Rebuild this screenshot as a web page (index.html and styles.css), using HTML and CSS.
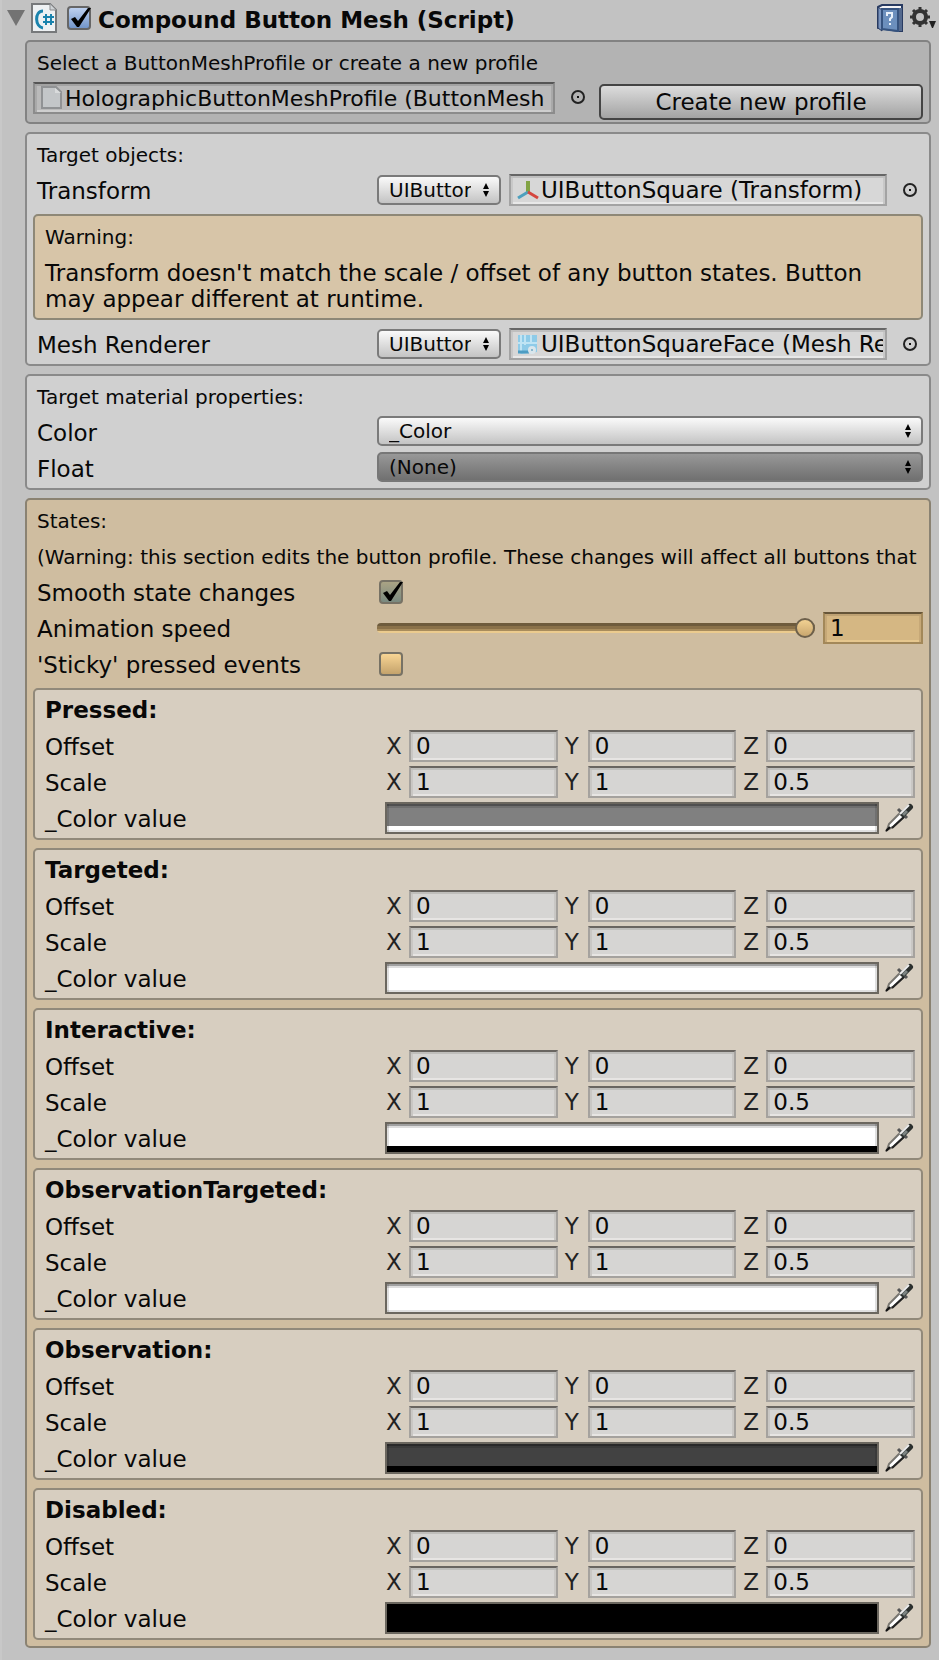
FILE: index.html
```html
<!DOCTYPE html>
<html lang="en">
<head>
<meta charset="utf-8">
<title>Compound Button Mesh (Script)</title>
<link rel="stylesheet" href="styles.css">
</head>
<body>
<svg class="defs" aria-hidden="true">
  <symbol id="picker" viewBox="0 0 16 16">
    <circle cx="8" cy="8" r="6" fill="none" stroke="#222" stroke-width="2"/>
    <rect x="7" y="7" width="2" height="2" fill="#111"/>
  </symbol>
  <symbol id="dropper" viewBox="0 0 30 30">
    <path d="M2 27L4 21L16 9L20 13L8 24Z" fill="#fff" stroke="#77756f" stroke-width="2"/>
    <path d="M7 25L20 13" stroke="#222" stroke-width="2" fill="none"/>
    <path d="M1 28L5 24" stroke="#111" stroke-width="2"/>
    <path d="M13 6L22 15" stroke="#555" stroke-width="3"/>
    <path d="M18 11L25 4" stroke="#2b302e" stroke-width="6" stroke-linecap="round"/>
    <path d="M15 11L24 2" stroke="#eee" stroke-width="2"/>
    <path d="M18 12L22 8" stroke="#7d8482" stroke-width="3"/>
  </symbol>
</svg>
<main class="inspector">
  <header class="header">
    <button class="plain" aria-label="Collapse"><svg width="18" height="16" viewBox="0 0 18 16"><path d="M0 0H18L9 16Z" fill="#737373"/></svg></button>
    <svg class="script-icon" width="26" height="30" viewBox="0 0 26 30">
      <path d="M1 1H19L25 7V29H1Z" fill="#eef1f3" stroke="#77797b" stroke-width="2"/>
      <path d="M19 1V7H25" fill="#cfd3d6" stroke="#8b8d8f"/>
      <path d="M12 8C3 8 4 24 12 25" fill="none" stroke="#1a83ad" stroke-width="3"/>
      <path d="M15 11V22M20 11V22M12 14H23M12 19H23" stroke="#1a83ad" stroke-width="2"/>
    </svg>
    <input type="checkbox" class="check blue" id="enabled" checked>
    <label class="title" for="enabled">Compound Button Mesh (Script)</label>
    <button class="plain" aria-label="Help"><svg width="26" height="28" viewBox="0 0 26 28">
      <path d="M1 3L5 1H25V27H21L1 24Z" fill="#f3f3f5" stroke="#293b61" stroke-width="2"/>
      <path d="M1 3L5 6V27L1 24Z" fill="#7993bd" stroke="#293b61"/>
      <path d="M5 5H21V27L5 25Z" fill="#6c8fbd" stroke="#36537f" stroke-width="2"/>
      <path d="M22 4H25V27H22Z" fill="#54698d"/>
      <path d="M10 12V9H15V13L13 15V17M13 19V21" fill="none" stroke="#e8f0fa" stroke-width="2"/>
    </svg></button>
    <button class="plain" aria-label="Component menu"><svg width="28" height="24" viewBox="0 0 28 24">
      <circle cx="11" cy="11" r="6" fill="none" stroke="#333" stroke-width="4"/>
      <path d="M11 1V5M11 17V21M1 11H5M17 11H21M4 4L7 7M15 15L18 18M4 18L7 15M15 7L18 4" stroke="#333" stroke-width="3"/>
      <path d="M20 15H27L24 22H23Z" fill="#222"/>
    </svg></button>
  </header>

  <section class="panel profile">
    <h2 class="caption">Select a ButtonMeshProfile or create a new profile</h2>
    <div class="profile-row">
      <div class="object">
        <svg width="22" height="24" viewBox="0 0 22 24"><path d="M1 1H15L20 6V22H1Z" fill="#c3c6c8" stroke="#909294" stroke-width="2"/><path d="M14 2V7H20" fill="#d9dbdc"/></svg>
        <input readonly aria-label="Profile" value="HolographicButtonMeshProfile (ButtonMesh">
      </div>
      <button class="plain pick" aria-label="Pick profile"><svg width="16" height="16"><use href="#picker"/></svg></button>
      <button class="create">Create new profile</button>
    </div>
  </section>

  <section class="panel targets">
    <h2 class="caption">Target objects:</h2>
    <div class="row">
      <label class="name" for="transform">Transform</label>
      <select class="popup mini" id="transform"><option>UIButtonSquare</option></select>
      <div class="object">
        <svg width="22" height="24" viewBox="0 0 22 24"><path d="M11 3V14" stroke="#82a344" stroke-width="4"/><path d="M11 14L1 20" stroke="#4da0be" stroke-width="3"/><path d="M11 14L21 20" stroke="#d5463f" stroke-width="3"/></svg>
        <input readonly aria-label="Transform object" value="UIButtonSquare (Transform)">
      </div>
      <button class="plain pick" aria-label="Pick transform"><svg width="16" height="16"><use href="#picker"/></svg></button>
    </div>
    <div class="warning">
      <h3 class="caption">Warning:</h3>
      <p>Transform doesn't match the scale / offset of any button states. Button may appear different at runtime.</p>
    </div>
    <div class="row">
      <label class="name" for="renderer">Mesh Renderer</label>
      <select class="popup mini" id="renderer"><option>UIButtonSquare</option></select>
      <div class="object">
        <svg width="22" height="24" viewBox="0 0 22 24"><path d="M1 3H20V20L4 22L1 19Z" fill="#8ecbe8"/><path d="M4 3V21M8 3V13M14 3V12M1 11H20" stroke="#bfe4f4" stroke-width="2"/><path d="M1 20H12" stroke="#4d9cc2" stroke-width="3"/><circle cx="15" cy="18" r="4" fill="#d9e6ec"/><circle cx="15" cy="18" r="1" fill="#6fa9c4"/></svg>
        <input readonly aria-label="Mesh renderer object" value="UIButtonSquareFace (Mesh Renderer)">
      </div>
      <button class="plain pick" aria-label="Pick mesh renderer"><svg width="16" height="16"><use href="#picker"/></svg></button>
    </div>
  </section>

  <section class="panel material">
    <h2 class="caption">Target material properties:</h2>
    <div class="row"><label class="name" for="color">Color</label><select class="popup" id="color"><option>_Color</option></select></div>
    <div class="row"><label class="name" for="float">Float</label><select class="popup dark" id="float"><option>(None)</option></select></div>
  </section>

  <section class="panel states">
    <h2 class="caption">States:</h2>
    <p class="note">(Warning: this section edits the button profile. These changes will affect all buttons that</p>
    <div class="row"><label class="name" for="smooth">Smooth state changes</label><input type="checkbox" class="check olive" id="smooth" checked></div>
    <div class="row"><label class="name" for="speed">Animation speed</label><input type="range" class="slider" id="speed" min="0" max="1" step="any" value="1"><input class="field amber" aria-label="Animation speed value" value="1"></div>
    <div class="row"><label class="name" for="sticky">'Sticky' pressed events</label><input type="checkbox" class="check gold" id="sticky"></div>

    <div class="state-list">
      <section class="state">
        <h3>Pressed:</h3>
        <div class="row"><span class="name">Offset</span><div class="vector"><label for="p-ox">X</label><input class="field" id="p-ox" value="0"><label for="p-oy">Y</label><input class="field" id="p-oy" value="0"><label for="p-oz">Z</label><input class="field" id="p-oz" value="0"></div></div>
        <div class="row"><span class="name">Scale</span><div class="vector"><label for="p-sx">X</label><input class="field" id="p-sx" value="1"><label for="p-sy">Y</label><input class="field" id="p-sy" value="1"><label for="p-sz">Z</label><input class="field" id="p-sz" value="0.5"></div></div>
        <div class="row"><span class="name">_Color value</span><button class="swatch gray opaque" aria-label="Color value"></button><button class="plain" aria-label="Eyedropper"><svg width="30" height="30"><use href="#dropper"/></svg></button></div>
      </section>
      <section class="state">
        <h3>Targeted:</h3>
        <div class="row"><span class="name">Offset</span><div class="vector"><label for="t-ox">X</label><input class="field" id="t-ox" value="0"><label for="t-oy">Y</label><input class="field" id="t-oy" value="0"><label for="t-oz">Z</label><input class="field" id="t-oz" value="0"></div></div>
        <div class="row"><span class="name">Scale</span><div class="vector"><label for="t-sx">X</label><input class="field" id="t-sx" value="1"><label for="t-sy">Y</label><input class="field" id="t-sy" value="1"><label for="t-sz">Z</label><input class="field" id="t-sz" value="0.5"></div></div>
        <div class="row"><span class="name">_Color value</span><button class="swatch white opaque" aria-label="Color value"></button><button class="plain" aria-label="Eyedropper"><svg width="30" height="30"><use href="#dropper"/></svg></button></div>
      </section>
      <section class="state">
        <h3>Interactive:</h3>
        <div class="row"><span class="name">Offset</span><div class="vector"><label for="i-ox">X</label><input class="field" id="i-ox" value="0"><label for="i-oy">Y</label><input class="field" id="i-oy" value="0"><label for="i-oz">Z</label><input class="field" id="i-oz" value="0"></div></div>
        <div class="row"><span class="name">Scale</span><div class="vector"><label for="i-sx">X</label><input class="field" id="i-sx" value="1"><label for="i-sy">Y</label><input class="field" id="i-sy" value="1"><label for="i-sz">Z</label><input class="field" id="i-sz" value="0.5"></div></div>
        <div class="row"><span class="name">_Color value</span><button class="swatch white" aria-label="Color value"></button><button class="plain" aria-label="Eyedropper"><svg width="30" height="30"><use href="#dropper"/></svg></button></div>
      </section>
      <section class="state">
        <h3>ObservationTargeted:</h3>
        <div class="row"><span class="name">Offset</span><div class="vector"><label for="ot-ox">X</label><input class="field" id="ot-ox" value="0"><label for="ot-oy">Y</label><input class="field" id="ot-oy" value="0"><label for="ot-oz">Z</label><input class="field" id="ot-oz" value="0"></div></div>
        <div class="row"><span class="name">Scale</span><div class="vector"><label for="ot-sx">X</label><input class="field" id="ot-sx" value="1"><label for="ot-sy">Y</label><input class="field" id="ot-sy" value="1"><label for="ot-sz">Z</label><input class="field" id="ot-sz" value="0.5"></div></div>
        <div class="row"><span class="name">_Color value</span><button class="swatch white opaque" aria-label="Color value"></button><button class="plain" aria-label="Eyedropper"><svg width="30" height="30"><use href="#dropper"/></svg></button></div>
      </section>
      <section class="state">
        <h3>Observation:</h3>
        <div class="row"><span class="name">Offset</span><div class="vector"><label for="o-ox">X</label><input class="field" id="o-ox" value="0"><label for="o-oy">Y</label><input class="field" id="o-oy" value="0"><label for="o-oz">Z</label><input class="field" id="o-oz" value="0"></div></div>
        <div class="row"><span class="name">Scale</span><div class="vector"><label for="o-sx">X</label><input class="field" id="o-sx" value="1"><label for="o-sy">Y</label><input class="field" id="o-sy" value="1"><label for="o-sz">Z</label><input class="field" id="o-sz" value="0.5"></div></div>
        <div class="row"><span class="name">_Color value</span><button class="swatch charcoal" aria-label="Color value"></button><button class="plain" aria-label="Eyedropper"><svg width="30" height="30"><use href="#dropper"/></svg></button></div>
      </section>
      <section class="state">
        <h3>Disabled:</h3>
        <div class="row"><span class="name">Offset</span><div class="vector"><label for="d-ox">X</label><input class="field" id="d-ox" value="0"><label for="d-oy">Y</label><input class="field" id="d-oy" value="0"><label for="d-oz">Z</label><input class="field" id="d-oz" value="0"></div></div>
        <div class="row"><span class="name">Scale</span><div class="vector"><label for="d-sx">X</label><input class="field" id="d-sx" value="1"><label for="d-sy">Y</label><input class="field" id="d-sy" value="1"><label for="d-sz">Z</label><input class="field" id="d-sz" value="0.5"></div></div>
        <div class="row"><span class="name">_Color value</span><button class="swatch black" aria-label="Color value"></button><button class="plain" aria-label="Eyedropper"><svg width="30" height="30"><use href="#dropper"/></svg></button></div>
      </section>
    </div>
  </section>
</main>
</body>
</html>
```

FILE: styles.css
```css
* { box-sizing: border-box; }
body {
  margin: 0;
  min-height: 100vh;
  background: #c2c2c2;
  border-left: 2px solid #c8c8c8;
  color: #080808;
  font: 23px/26px "DejaVu Sans", Verdana, sans-serif;
}
h2, h3, p { margin: 0; }
input, button, select { font: inherit; color: inherit; margin: 0; border-radius: 0; min-width: 0; }
svg { display: block; flex: none; }
.defs { position: absolute; width: 0; height: 0; }
.plain { border: 0; padding: 0; background: none; flex: none; }

.inspector { padding: 0 8px 12px 23px; display: flex; flex-direction: column; gap: 8px; }

.header { display: flex; align-items: center; height: 32px; margin: 4px -6px -4px -18px; padding-bottom: 4px; }
.script-icon { margin: 0 10px 0 6px; }
.title { flex: 1; margin-left: 7px; font-weight: bold; white-space: nowrap; padding-top: 4px; }
.header .plain:last-child { margin-left: 6px; }

.panel { border: 2px solid #8a8a8a; border-radius: 5px; padding: 0 6px; background: #d0d0d0; }
.caption { font-size: 20px; line-height: 38px; font-weight: normal; padding: 2px 0 0 4px; white-space: nowrap; overflow: hidden; }
.row { display: flex; align-items: center; }
.name { flex: 0 0 344px; padding: 2px 0 0 4px; white-space: nowrap; }

.profile { background: #b3b3b3; border-color: #828282; padding-bottom: 2px; }
.profile-row { display: flex; align-items: flex-start; }
.profile .object { flex: 1 1 522px; font-size: 22px; background: #bababa; border-color: #555 #8c8c8c #8c8c8c; box-shadow: inset 0 2px #a2a2a2, inset 2px 0 #a9a9a9, inset -2px 0 #a9a9a9, inset 0 -2px #cfcfcf; }
.profile .pick { margin: 7px 13px 0 15px; }
.create {
  flex: 0 1 324px;
  height: 36px;
  margin-top: 2px;
  padding: 0;
  border: 2px solid #444;
  border-radius: 5px;
  background: linear-gradient(#dcdcdc, #a3a3a3);
  white-space: nowrap;
}

.object {
  flex: 1;
  min-width: 0;
  height: 32px;
  display: flex;
  align-items: center;
  gap: 2px;
  padding: 0 2px 0 6px;
  border: 2px solid #a3a3a3;
  border-top-color: #666;
  background: #d7d7d7;
  box-shadow: inset 0 2px #bfbfbf, inset 2px 0 #c8c8c8, inset -2px 0 #c8c8c8, inset 0 -2px #e8e8e8;
}
.object input { flex: 1; height: 28px; border: 0; padding: 0; background: none; outline: 0; }
.pick { margin: 0 5px 0 15px; }

.popup {
  flex: 1;
  height: 30px;
  padding: 0 24px 0 10px;
  appearance: none;
  border: 2px solid #7a7a7a;
  border-radius: 5px;
  font-size: 20px;
  line-height: 24px;
  background: url("data:image/svg+xml,%3Csvg xmlns='http://www.w3.org/2000/svg' width='6' height='14'%3E%3Cpath d='M3 0L6 6H0ZM3 14L0 8H6Z'/%3E%3C/svg%3E") no-repeat right 10px center, linear-gradient(#fafafa, #c3c3c3);
}
.popup.dark { border-color: #777; background: url("data:image/svg+xml,%3Csvg xmlns='http://www.w3.org/2000/svg' width='6' height='14'%3E%3Cpath d='M3 0L6 6H0ZM3 14L0 8H6Z'/%3E%3C/svg%3E") no-repeat right 10px center, linear-gradient(#989898, #707070); }
.popup.mini { flex: 0 0 124px; margin-right: 8px; padding-right: 28px; }

.targets { padding-bottom: 4px; }
.warning { margin: 8px 0; padding: 0 6px 6px; border: 2px solid #8e8877; border-radius: 5px; background: #d7c5a8; }
.warning p { padding: 4px 4px 0; }

.material .row { height: 36px; align-items: flex-start; line-height: 30px; }

.states { background: #cfbda0; border-color: #8a8272; padding-bottom: 6px; }
.note { height: 34px; padding-left: 4px; font-size: 20px; line-height: 34px; white-space: nowrap; overflow: hidden; }
.states > .row { height: 36px; }

.check {
  appearance: none;
  flex: none;
  width: 24px;
  height: 24px;
  border: 2px solid #777265;
  border-radius: 4px;
}
.blue { border-color: #666; background: linear-gradient(#bdd0ef, #7295c9); }
.olive { background: linear-gradient(#aaa384, #7a8a80); }
.gold { background: linear-gradient(#f8d594, #c4a36c); }
.states .check { margin-left: 2px; }
.check:checked::before {
  content: "";
  display: block;
  width: 24px;
  height: 24px;
  margin: -2px;
  background: url("data:image/svg+xml,%3Csvg xmlns='http://www.w3.org/2000/svg' width='24' height='24'%3E%3Cpath d='M4 13L8 11L11 15L21 2H24L12 21H10Z'/%3E%3C/svg%3E");
}

.slider { appearance: none; flex: 1; height: 20px; background: none; }
.slider::-webkit-slider-runnable-track { height: 10px; border-radius: 4px; background: linear-gradient(#6e5b3c 0 3px, #8a7149 3px 6px, #a88c5c 6px 8px, #ebcb8e 8px); }
.slider::-webkit-slider-thumb { appearance: none; width: 20px; height: 20px; margin-top: -5px; border: 2px solid #6d604b; border-radius: 10px; background: linear-gradient(#f2d192, #c9a76f); }

.field {
  width: 100%;
  height: 32px;
  padding: 0 5px;
  border: 2px solid #a5a29e;
  border-top-color: #696560;
  background: #d6d5d3;
  box-shadow: inset 0 2px #bfbebb, inset 2px 0 #c9c7c4, inset -2px 0 #c9c7c4, inset 0 -2px #e7e5e3;
  outline: 0;
}
.amber { flex: 0 0 100px; margin-left: 8px; background: #d5b783; border-color: #665538 #a38859 #a38859; box-shadow: inset 0 2px #bfa273, inset 2px 0 #c6a877, inset -2px 0 #c6a877, inset 0 -2px #e6c78e; }

.state-list { display: flex; flex-direction: column; gap: 8px; margin-top: 6px; }
.state { padding: 0 6px 4px; border: 2px solid #91897a; border-radius: 5px; background: #d7cec0; }
.state h3 { font-size: 23px; line-height: 40px; padding-left: 4px; }
.state .row { height: 32px; }
.state .row + .row { margin-top: 4px; }
.vector { flex: 1; display: grid; grid-template-columns: 24px 1fr 30px 1fr 30px 1fr; align-items: center; }
.vector label { padding-left: 1px; color: #222; }
.vector label + input + label { padding-left: 7px; }
.swatch {
  --fill: #fff;
  --alpha: #000;
  flex: 1;
  height: 32px;
  margin-right: 6px;
  padding: 0;
  border: 2px solid #6b675f;
  background: linear-gradient(var(--fill) 0 22px, var(--alpha) 22px);
  box-shadow: inset 0 2px rgba(0,0,0,.28), inset 0 4px rgba(0,0,0,.13), inset 2px 0 rgba(0,0,0,.12), inset -2px 0 rgba(0,0,0,.12), inset 0 -2px rgba(0,0,0,.12);
}
.opaque { --alpha: #fff; }
.gray { --fill: #808080; }
.charcoal { --fill: #424242; }
.black { --fill: #000; }
```
